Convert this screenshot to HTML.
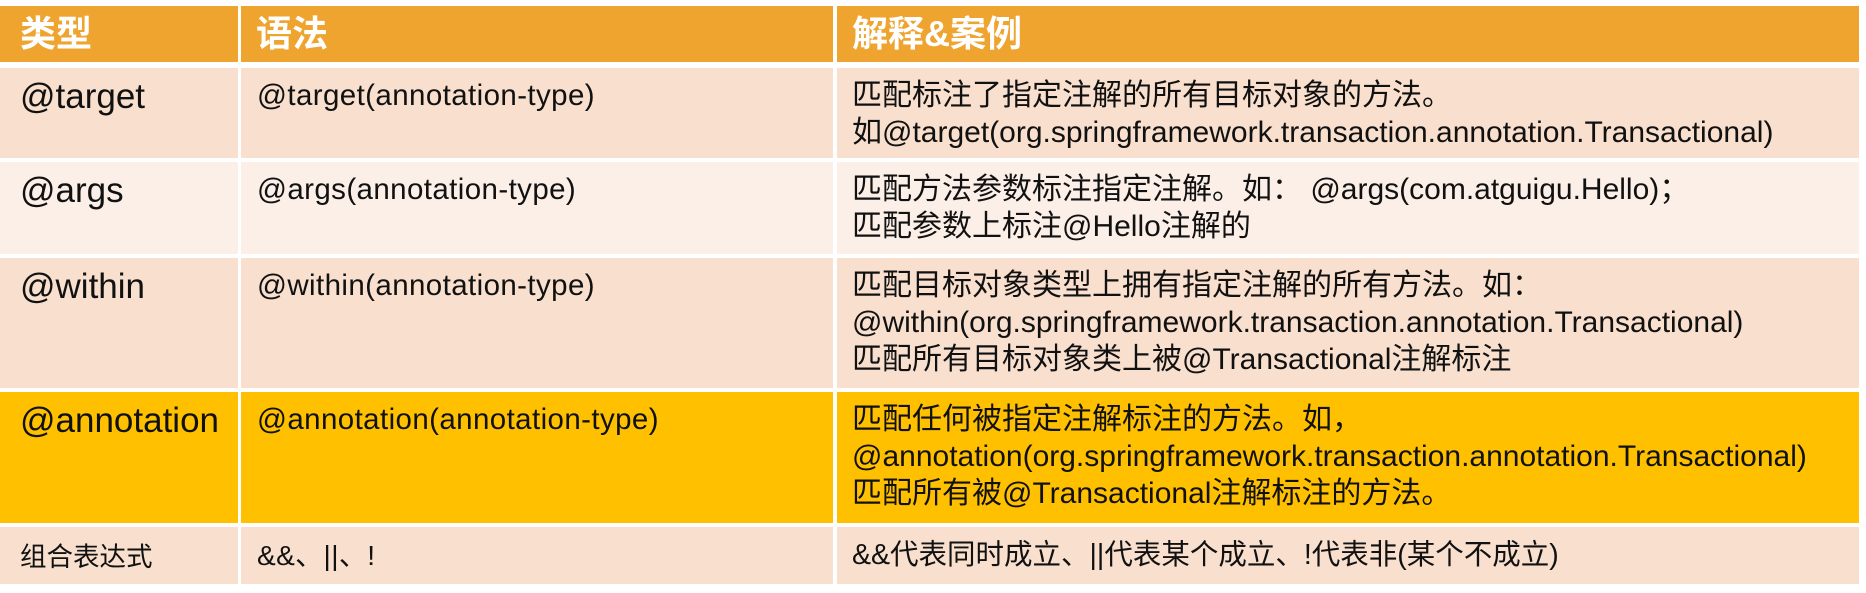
<!DOCTYPE html>
<html><head><meta charset="utf-8"><style>
body{margin:0;width:1866px;height:593px;background:#fff;position:relative;overflow:hidden;font-family:"Liberation Sans","Noto Sans CJK SC",sans-serif;color:#111}
.c{position:absolute;box-sizing:border-box;white-space:nowrap}
.h{background:#EEA42F;color:#fff;font-weight:bold;font-size:36px;line-height:56px;padding-left:20px}
.r1{background:#F8DFCE}.r2{background:#FBEFE7}.r4{background:#FFC000}
.a{padding:10px 0 0 20px;font-size:35px;line-height:37px}
.b{padding:9px 0 0 16px;font-size:29.5px;line-height:37px;letter-spacing:0.4px}
.d{padding:9px 0 0 15px;font-size:30px;line-height:37px}
</style></head><body>
<div class="c h" style="left:0;top:6px;width:238px;height:56px">类型</div>
<div class="c h" style="left:241px;top:6px;width:592px;height:56px;padding-left:15px">语法</div>
<div class="c h" style="left:837px;top:6px;width:1022px;height:56px;padding-left:15px">解释&amp;案例</div>

<div class="c r1 a" style="left:0;top:68px;width:238px;height:90px">@target</div>
<div class="c r1 b" style="left:241px;top:68px;width:592px;height:90px">@target(annotation-type)</div>
<div class="c r1 d" style="left:837px;top:68px;width:1022px;height:90px">匹配标注了指定注解的所有目标对象的方法。<br>如@target(org.springframework.transaction.annotation.Transactional)</div>

<div class="c r2 a" style="left:0;top:162px;width:238px;height:92px">@args</div>
<div class="c r2 b" style="left:241px;top:162px;width:592px;height:92px">@args(annotation-type)</div>
<div class="c r2 d" style="left:837px;top:162px;width:1022px;height:92px">匹配方法参数标注指定注解。如： @args(com.atguigu.Hello)；<br>匹配参数上标注@Hello注解的</div>

<div class="c r1 a" style="left:0;top:258px;width:238px;height:130px">@within</div>
<div class="c r1 b" style="left:241px;top:258px;width:592px;height:130px">@within(annotation-type)</div>
<div class="c r1 d" style="left:837px;top:258px;width:1022px;height:130px">匹配目标对象类型上拥有指定注解的所有方法。如：<br>@within(org.springframework.transaction.annotation.Transactional)<br>匹配所有目标对象类上被@Transactional注解标注</div>

<div class="c r4 a" style="left:0;top:392px;width:238px;height:131px">@annotation</div>
<div class="c r4 b" style="left:241px;top:392px;width:592px;height:131px">@annotation(annotation-type)</div>
<div class="c r4 d" style="left:837px;top:392px;width:1022px;height:131px">匹配任何被指定注解标注的方法。如，<br>@annotation(org.springframework.transaction.annotation.Transactional)<br>匹配所有被@Transactional注解标注的方法。</div>

<div class="c r1 a" style="left:0;top:527px;width:238px;height:57px;font-size:26.5px;padding-top:12px">组合表达式</div>
<div class="c r1 b" style="left:241px;top:527px;width:592px;height:57px;font-size:28px;padding-top:10px">&amp;&amp;、||、!</div>
<div class="c r1 d" style="left:837px;top:527px;width:1022px;height:57px;font-size:28.5px;padding-top:10px">&amp;&amp;代表同时成立、||代表某个成立、!代表非(某个不成立)</div>
</body></html>
